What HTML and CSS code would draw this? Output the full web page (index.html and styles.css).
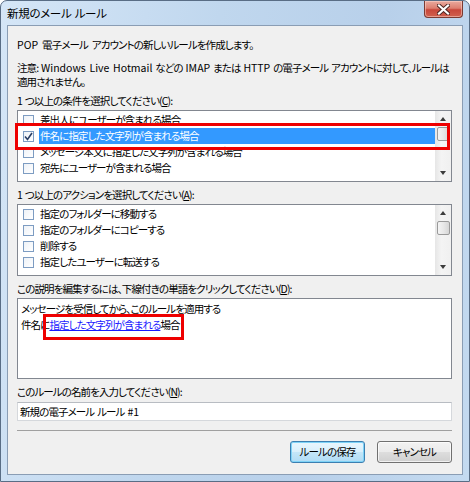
FILE: index.html
```html
<!DOCTYPE html>
<html lang="ja">
<head>
<meta charset="utf-8">
<title>新規のメール ルール</title>
<link rel="stylesheet" href="styles.css">
</head>
<body>
<div class="window">
  <div class="titlebar">
    <span class="title">新規のメール ルール</span>
    <div class="close">
      <svg width="13" height="11" viewBox="0 0 13 11">
        <path d="M2 1.5 L11 9.5 M11 1.5 L2 9.5" stroke="#4a2420" stroke-width="4" stroke-linecap="square"/>
        <path d="M2 1.5 L11 9.5 M11 1.5 L2 9.5" stroke="#ffffff" stroke-width="2.2" stroke-linecap="square"/>
      </svg>
    </div>
  </div>
  <div class="client">
    <p class="intro"><span class="lat">POP</span> 電子メール アカウントの新しいルールを作成します。</p>
    <p class="note">注意: <span class="lat">Windows Live Hotmail</span> などの <span class="lat">IMAP</span> または <span class="lat">HTTP</span> の電子メール アカウントに対して、ルールは<br>適用されません。</p>

    <div class="label">1 つ以上の条件を選択してください(<u>C</u>):</div>
    <div class="listwrap">
      <div class="listbox">
        <div class="items">
          <div class="row"><span class="cb"></span><span class="txt">差出人にユーザーが含まれる場合</span></div>
          <div class="row sel"><span class="cb">
            <svg width="9" height="9" viewBox="0 0 9 9"><path d="M1 4.5 L3.5 7.5 L8 1" fill="none" stroke="#2a3f66" stroke-width="1.6"/></svg>
          </span><span class="txt">件名に指定した文字列が含まれる場合</span></div>
          <div class="row"><span class="cb"></span><span class="txt">メッセージ本文に指定した文字列が含まれる場合</span></div>
          <div class="row"><span class="cb"></span><span class="txt">宛先にユーザーが含まれる場合</span></div>
        </div>
        <div class="scrollbar">
          <span class="arrow"><span class="tri up"></span></span>
          <span class="thumb"></span>
          <span class="track"></span>
          <span class="arrow"><span class="tri down"></span></span>
        </div>
      </div>
      <div class="redbox rb1"></div>
    </div>

    <div class="label">1 つ以上のアクションを選択してください(<u>A</u>):</div>
    <div class="listwrap">
      <div class="listbox">
        <div class="items">
          <div class="row"><span class="cb"></span><span class="txt">指定のフォルダーに移動する</span></div>
          <div class="row"><span class="cb"></span><span class="txt">指定のフォルダーにコピーする</span></div>
          <div class="row"><span class="cb"></span><span class="txt">削除する</span></div>
          <div class="row"><span class="cb"></span><span class="txt">指定したユーザーに転送する</span></div>
        </div>
        <div class="scrollbar">
          <span class="arrow"><span class="tri up"></span></span>
          <span class="thumb"></span>
          <span class="track"></span>
          <span class="arrow"><span class="tri down"></span></span>
        </div>
      </div>
    </div>

    <div class="label">この説明を編集するには、下線付きの単語をクリックしてください(<u>D</u>):</div>
    <div class="listwrap">
      <div class="descbox">
        <div class="dline">メッセージを受信してから、このルールを適用する</div>
        <div class="dline">件名に<a class="link">指定した文字列が含まれる</a>場合</div>
      </div>
      <div class="redbox rb2"></div>
    </div>

    <div class="label">このルールの名前を入力してください(<u>N</u>):</div>
    <div class="input">新規の電子メール ルール <span class="lat">#1</span></div>

    <div class="sep"></div>

    <div class="buttons">
      <div class="btn default">ルールの保存</div>
      <div class="btn">キャンセル</div>
    </div>
  </div>
</div>
</body>
</html>
```
FILE: styles.css
```css
* { box-sizing: border-box; }
html, body { margin: 0; padding: 0; }
body {
  width: 470px;
  height: 482px;
  overflow: hidden;
  background: #ffffff;
  font-family: "Noto Sans CJK JP", "Noto Sans", sans-serif;
  font-size: 10.5px;
  letter-spacing: -0.9px;
  font-feature-settings: "palt";
  color: #000;
}
.lat { letter-spacing: 0; }
.window {
  position: relative;
  width: 470px;
  height: 482px;
  border: 1px solid #596d85;
  border-radius: 7px 7px 0 0;
  background: linear-gradient(100deg, #d5e6f7 0%, #c0d7ee 40%, #b8d0ea 70%, #c4daf0 100%);
  display: flex;
  flex-direction: column;
}
.titlebar {
  height: 24px;
  display: flex;
  align-items: center;
  padding-left: 6px;
}
.title {
  font-size: 11.5px;
  letter-spacing: -0.3px;
  word-spacing: 1px;
  line-height: 14px;
  color: #000;
}
.close {
  position: absolute;
  top: 0;
  right: 6px;
  width: 39px;
  height: 17px;
  border: 1px solid #7a3a32;
  border-top: none;
  border-radius: 0 0 4px 4px;
  background: linear-gradient(#e9aa9e 0%, #dd7f70 45%, #c8473a 55%, #d0614f 100%);
  box-shadow: inset 0 0 0 1px rgba(255,220,210,0.5);
  display: flex;
  align-items: center;
  justify-content: center;
}
.client {
  margin: 0 6px 6px 6px;
  height: 450px;
  border: 1px solid #8a9db4;
  background: #f0f0f0;
  padding: 12px 10px 0 9px;
  display: flex;
  flex-direction: column;
}
.intro {
  margin: 0;
  line-height: 14px;
  white-space: nowrap;
  word-spacing: 2.5px;
}
.note {
  margin: 9px 0 0 0;
  line-height: 14px;
  white-space: nowrap;
  word-spacing: 1.4px;
}
.label {
  margin-top: 6px;
  line-height: 14px;
  white-space: nowrap;
  word-spacing: 1.5px;
}
.note + .label { margin-top: 5px; }
.label u { text-decoration: underline; }
.listwrap {
  position: relative;
  margin-top: 2px;
}
.listbox {
  height: 72px;
  border: 1px solid #828790;
  background: #fff;
  display: flex;
}
.items {
  flex: 1;
  overflow: hidden;
  padding-top: 1px;
}
.row {
  height: 16px;
  display: flex;
  align-items: center;
  padding-left: 5px;
}
.cb {
  width: 11px;
  height: 11px;
  border: 1px solid #7d9cc2;
  background: linear-gradient(135deg, #eef2f7, #ffffff);
  margin-right: 5px;
  display: flex;
  align-items: center;
  justify-content: center;
  flex: none;
}
.txt {
  flex: 1;
  height: 16px;
  line-height: 16px;
  padding-left: 1px;
  white-space: nowrap;
}
.row.sel .txt {
  background: #3399ff;
  color: #fff;
}
.scrollbar {
  width: 16px;
  flex: none;
  background: linear-gradient(90deg, #e6e6e6, #f4f4f4 40%, #f0f0f0);
  display: flex;
  flex-direction: column;
  align-items: center;
}
.arrow {
  height: 16px;
  width: 16px;
  display: flex;
  align-items: center;
  justify-content: center;
  flex: none;
}
.tri {
  width: 0;
  height: 0;
  border-left: 3px solid transparent;
  border-right: 3px solid transparent;
}
.tri.up { border-bottom: 4px solid #3c3c3c; }
.tri.down { border-top: 4px solid #3c3c3c; }
.thumb {
  width: 13px;
  height: 14px;
  flex: none;
  border: 1px solid #9a9a9a;
  border-radius: 2px;
  background: linear-gradient(90deg, #f4f4f4, #e8e8e8 50%, #d6d6d6);
}
.track { flex: 1; }
.redbox {
  position: absolute;
  border: 3px solid #ee0000;
  pointer-events: none;
}
.rb1 { left: -2px; top: 13px; width: 435px; height: 27px; }
.rb2 { left: 26px; top: 16px; width: 141px; height: 26px; }
.descbox {
  height: 81px;
  border: 1px solid #828790;
  background: #fff;
  padding: 2px 3px;
}
.dline {
  line-height: 16px;
  white-space: nowrap;
}
.link {
  color: #1a1aff;
  text-decoration: underline;
}
.label + .listwrap { margin-top: 2px; }
.listwrap + .label { margin-top: 6px; }
.input {
  margin-top: 3px;
  height: 19px;
  border: 1px solid #d5d8dc;
  border-top-color: #b8bcc2;
  background: #fff;
  line-height: 17px;
  padding-left: 2px;
  white-space: nowrap;
  word-spacing: 1.5px;
}
.sep {
  margin-top: 9px;
  height: 1px;
  background: #a0a0a0;
}
.buttons {
  margin-top: 10px;
  display: flex;
  justify-content: flex-end;
  gap: 12px;
}
.btn {
  width: 75px;
  height: 22px;
  border: 1px solid #707070;
  border-radius: 3px;
  background: linear-gradient(#f2f2f2 0%, #ebebeb 48%, #dddddd 52%, #cfcfcf 100%);
  box-shadow: inset 0 0 0 1px rgba(255,255,255,0.7);
  display: flex;
  align-items: center;
  justify-content: center;
  line-height: 14px;
}
.btn.default {
  border-color: #3c7fb1;
  background: linear-gradient(#eaf6fd 0%, #d9f0fc 48%, #c4e6f8 52%, #b0dcf5 100%);
  box-shadow: inset 0 0 0 1px #7fd3f7;
}
```
